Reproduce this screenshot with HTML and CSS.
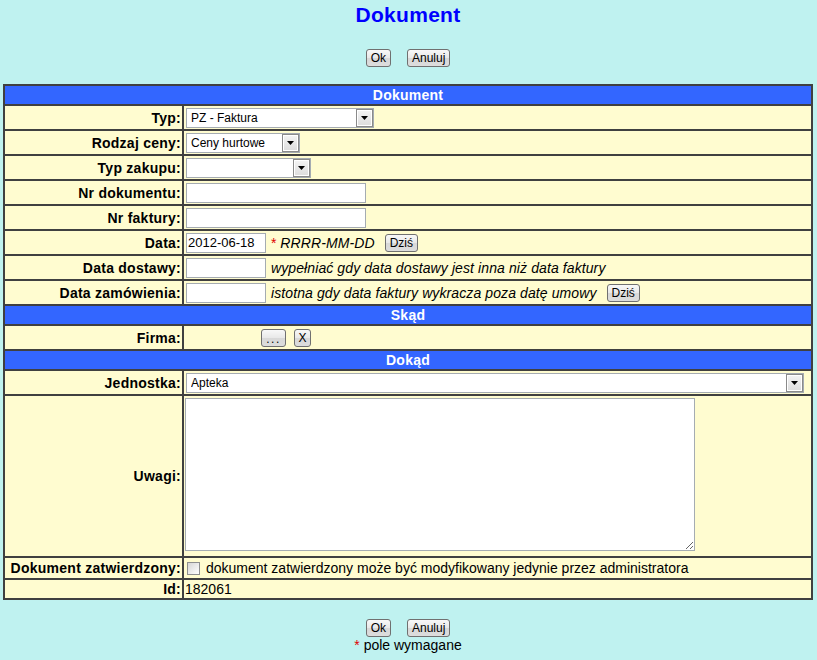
FILE: index.html
```html
<!DOCTYPE html>
<html lang="pl">
<head>
<meta charset="utf-8">
<title>Dokument</title>
<link rel="stylesheet" href="styles.css">
</head>
<body>
<h1 class="title">Dokument</h1>
<div class="actions">
  <button class="btn" type="button">Ok</button>
  <button class="btn" type="button">Anuluj</button>
</div>
<table class="form">
  <tr><th colspan="2" class="section">Dokument</th></tr>
  <tr>
    <td class="label">Typ:</td>
    <td class="value"><div class="field">
      <span class="sel sel-typ"><select><option>PZ - Faktura</option></select><span class="drop"><svg width="7" height="4" viewBox="0 0 7 4"><path d="M0 0h7L3.5 4z" fill="#000"/></svg></span></span>
    </div></td>
  </tr>
  <tr>
    <td class="label">Rodzaj ceny:</td>
    <td class="value"><div class="field">
      <span class="sel sel-cena"><select><option>Ceny hurtowe</option></select><span class="drop"><svg width="7" height="4" viewBox="0 0 7 4"><path d="M0 0h7L3.5 4z" fill="#000"/></svg></span></span>
    </div></td>
  </tr>
  <tr>
    <td class="label">Typ zakupu:</td>
    <td class="value"><div class="field">
      <span class="sel sel-zakup"><select><option></option></select><span class="drop"><svg width="7" height="4" viewBox="0 0 7 4"><path d="M0 0h7L3.5 4z" fill="#000"/></svg></span></span>
    </div></td>
  </tr>
  <tr>
    <td class="label">Nr dokumentu:</td>
    <td class="value"><div class="field"><input class="inp inp-text" type="text"></div></td>
  </tr>
  <tr>
    <td class="label">Nr faktury:</td>
    <td class="value"><div class="field"><input class="inp inp-text" type="text"></div></td>
  </tr>
  <tr>
    <td class="label">Data:</td>
    <td class="value"><div class="field">
      <input class="inp inp-date" type="text" value="2012-06-18">
      <span class="note"><span class="req">*</span> <i>RRRR-MM-DD</i></span>
      <button class="btn btn-today" type="button">Dziś</button>
    </div></td>
  </tr>
  <tr>
    <td class="label">Data dostawy:</td>
    <td class="value"><div class="field">
      <input class="inp inp-date" type="text">
      <span class="note"><i>wypełniać gdy data dostawy jest inna niż data faktury</i></span>
    </div></td>
  </tr>
  <tr>
    <td class="label">Data zamówienia:</td>
    <td class="value"><div class="field">
      <input class="inp inp-date" type="text">
      <span class="note"><i>istotna gdy data faktury wykracza poza datę umowy</i></span>
      <button class="btn btn-today2" type="button">Dziś</button>
    </div></td>
  </tr>
  <tr><th colspan="2" class="section">Skąd</th></tr>
  <tr>
    <td class="label">Firma:</td>
    <td class="value"><div class="field">
      <span class="firma-name"></span>
      <button class="btn btn-dots" type="button">...</button>
      <button class="btn btn-x" type="button">X</button>
    </div></td>
  </tr>
  <tr><th colspan="2" class="section">Dokąd</th></tr>
  <tr>
    <td class="label">Jednostka:</td>
    <td class="value"><div class="field">
      <span class="sel sel-jedn"><select><option>Apteka</option></select><span class="drop"><svg width="7" height="4" viewBox="0 0 7 4"><path d="M0 0h7L3.5 4z" fill="#000"/></svg></span></span>
    </div></td>
  </tr>
  <tr>
    <td class="label">Uwagi:</td>
    <td class="value"><div class="field field-area"><textarea class="area"></textarea></div></td>
  </tr>
  <tr>
    <td class="label">Dokument zatwierdzony:</td>
    <td class="value"><div class="field field-check">
      <input class="chk" type="checkbox">
      <span>dokument zatwierdzony może być modyfikowany jedynie przez administratora</span>
    </div></td>
  </tr>
  <tr>
    <td class="label">Id:</td>
    <td class="value"><div class="field field-text">182061</div></td>
  </tr>
</table>
<div class="actions actions-bottom">
  <button class="btn" type="button">Ok</button>
  <button class="btn" type="button">Anuluj</button>
</div>
<p class="legend"><span class="req">*</span> pole wymagane</p>
</body>
</html>
```

FILE: styles.css
```css
html, body {
  margin: 0;
  padding: 0;
}
body {
  background: #bff2f0;
  font-family: "Liberation Sans", Arial, sans-serif;
  font-size: 14px;
  color: #000;
  padding: 0 4px 0 3px;
}
.title {
  margin: 3px 0 0;
  font-size: 21px;
  line-height: 24px;
  font-weight: bold;
  color: #0000ff;
  text-align: center;
  letter-spacing: 0.3px;
}
.actions {
  display: flex;
  justify-content: center;
  gap: 16px;
  margin-top: 22px;
  margin-bottom: 17px;
}
.actions-bottom {
  margin-top: 19px;
  margin-bottom: 0;
}
.btn {
  font-family: "Liberation Sans", Arial, sans-serif;
  font-size: 12px;
  line-height: 14px;
  height: 18px;
  padding: 0 4px;
  margin: 0;
  border: 1px solid #707070;
  border-radius: 3px;
  background: linear-gradient(#f8f8f8, #e8e8e8 50%, #d8d8d8 51%, #dddddd);
  color: #000;
  box-sizing: border-box;
}
.form {
  width: 100%;
  border-collapse: separate;
  border-spacing: 0;
  border: 1px solid #404040;
}
.form td, .form th {
  border: 1px solid #404040;
  padding: 1px;
  background: #fffcd0;
}
.form th.section {
  background: #3366ff;
  color: #fff;
  font-weight: bold;
  font-size: 14px;
  line-height: 16px;
  letter-spacing: 0.25px;
  text-align: center;
}
.form td.label {
  width: 175px;
  text-align: right;
  font-weight: bold;
  letter-spacing: 0.25px;
  vertical-align: middle;
  white-space: nowrap;
  line-height: 16px;
}
.form td.value {
  vertical-align: middle;
}
.field {
  display: flex;
  align-items: center;
  height: 21px;
  white-space: nowrap;
}
.field-area {
  height: 158px;
  align-items: flex-start;
}
.field-check {
  height: 18px;
}
.field-text {
  height: 16px;
  line-height: 16px;
}
.inp {
  box-sizing: border-box;
  height: 20px;
  margin: 0 0 0 1px;
  border: 1px solid #a5acb2;
  background: #fff;
  font-family: "Liberation Sans", Arial, sans-serif;
  font-size: 13px;
  padding: 0 1px;
  outline: none;
}
.inp-text {
  width: 180px;
}
.inp-date {
  width: 80px;
}
.note {
  margin-left: 5px;
}
.note i {
  letter-spacing: 0.1px;
}
.req {
  color: #e00000;
}
.btn-today {
  margin-left: 10px;
}
.btn-today2 {
  margin-left: 10px;
}
.sel {
  position: relative;
  display: inline-block;
  height: 20px;
  margin-left: 1px;
}
.sel select {
  appearance: none;
  -webkit-appearance: none;
  box-sizing: border-box;
  width: 100%;
  height: 20px;
  margin: 0;
  padding: 0 20px 0 4px;
  border: 1px solid #a5acb2;
  background: #fff;
  font-family: "Liberation Sans", Arial, sans-serif;
  font-size: 12px;
  color: #000;
  outline: none;
}
.sel .drop {
  position: absolute;
  top: 1px;
  right: 1px;
  width: 17px;
  height: 18px;
  box-sizing: border-box;
  border: 1px solid #8a8a8a;
  background: linear-gradient(#f4f4f4, #dcdcdc);
  box-shadow: inset 0 0 0 1px #ffffff;
  display: flex;
  align-items: center;
  justify-content: center;
  pointer-events: none;
}
.sel-typ { width: 188px; }
.sel-cena { width: 114px; }
.sel-zakup { width: 125px; }
.sel-jedn { width: 618px; }
.firma-name {
  display: inline-block;
  width: 76px;
}
.btn-dots {
  width: 25px;
  padding: 0;
  letter-spacing: 1.5px;
  line-height: 18px;
}
.btn-x {
  width: 17px;
  padding: 0;
  margin-left: 8px;
}
.area {
  box-sizing: border-box;
  width: 510px;
  height: 153px;
  margin: 1px 0 0 0;
  border: 1px solid #a5acb2;
  background: #fff;
  font-family: "Liberation Sans", Arial, sans-serif;
  font-size: 13px;
  outline: none;
}
.chk {
  appearance: none;
  -webkit-appearance: none;
  box-sizing: border-box;
  width: 13px;
  height: 13px;
  margin: 0 6px 0 2px;
  border: 1px solid #8e8f8f;
  background: linear-gradient(135deg, #d6d6d6, #ffffff);
}
.legend {
  margin: 0;
  text-align: center;
  line-height: 16px;
}
```
